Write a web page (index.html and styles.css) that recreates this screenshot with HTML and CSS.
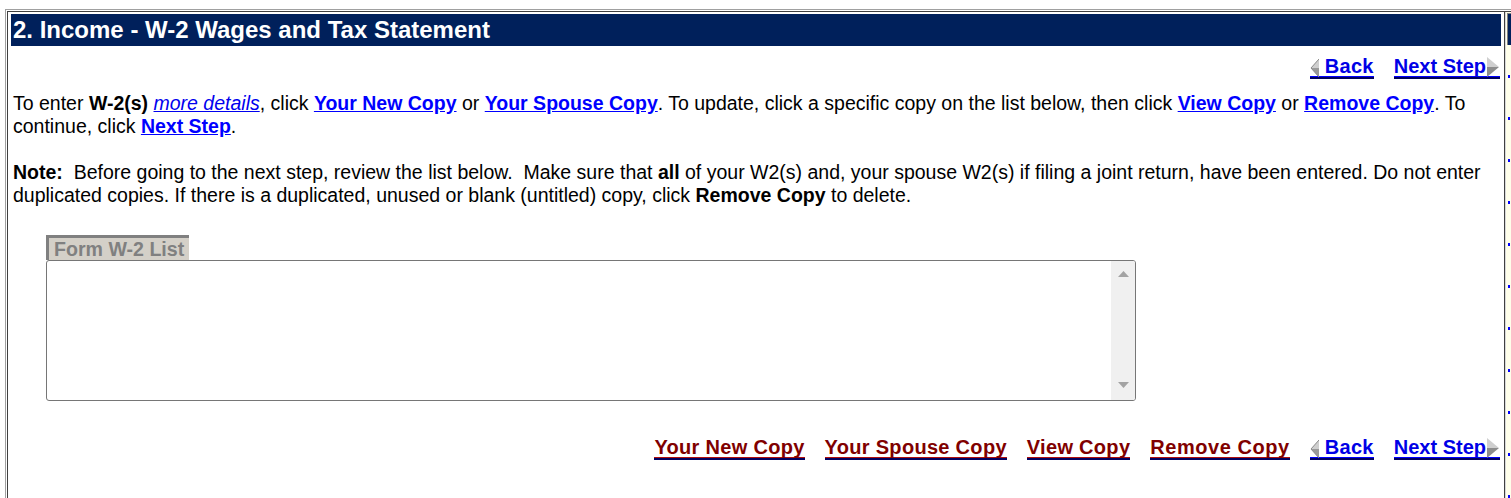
FILE: index.html
```html
<!DOCTYPE html>
<html>
<head>
<meta charset="utf-8">
<title>Income - W-2 Wages and Tax Statement</title>
<link rel="stylesheet" href="styles.css">
</head>
<body>
<div class="frameset">
  <div class="frameset-inner">
    <main class="main">
      <div class="title">2. Income - W-2 Wages and Tax Statement</div>
      <div class="navrow top">
        <a class="imgbtn blue back" href="#"><svg class="arr-l" width="9" height="20" viewBox="0 0 9 20"><polygon points="9,1 1,10 9,10" fill="#cfcfcf"/><polygon points="1,10 9,10 9,19" fill="#9a9a9a"/><polyline points="9,1 1,10 9,19" fill="none" stroke="#8a8a8a" stroke-width="1"/></svg><span>Back</span></a>
        <a class="imgbtn blue next" href="#"><span>Next Step</span><svg class="arr-r" width="13" height="20" viewBox="0 0 13 20"><polygon points="0,0 12,10 0,10" fill="#cfcfcf"/><polygon points="0,10 12,10 0,20" fill="#8c8c8c"/></svg></a>
      </div>
      <p class="para">To enter <b>W-2(s)</b> <a class="detail" href="#">more details</a>, click <a class="lnk" href="#">Your New Copy</a> or <a class="lnk" href="#">Your Spouse Copy</a>. To update, click a specific copy on the list below, then click <a class="lnk" href="#">View Copy</a> or <a class="lnk" href="#">Remove Copy</a>. To continue, click <a class="lnk" href="#">Next Step</a>.</p>
      <p class="para note"><b>Note:</b>&nbsp; Before going to the next step, review the list below.&nbsp; Make sure that <b>all</b> of your W2(s) and, your spouse W2(s) if filing a joint return, have been entered. Do not enter duplicated copies. If there is a duplicated, unused or blank (untitled) copy, click <b>Remove Copy</b> to delete.</p>
      <div class="list-section">
        <div class="tab">Form W-2 List</div>
        <div class="listbox">
          <div class="scroll">
            <svg width="11" height="6" viewBox="0 0 11 6"><polygon points="5.5,0 11,6 0,6" fill="#a3a3a3"/></svg>
            <svg width="11" height="6" viewBox="0 0 11 6"><polygon points="0,0 11,0 5.5,6" fill="#a3a3a3"/></svg>
          </div>
        </div>
      </div>
      <div class="navrow bottom">
        <a class="imgbtn red" href="#"><span>Your New Copy</span></a>
        <a class="imgbtn red" href="#"><span>Your Spouse Copy</span></a>
        <a class="imgbtn red" href="#"><span>View Copy</span></a>
        <a class="imgbtn red wide" href="#"><span>Remove Copy</span></a>
        <a class="imgbtn blue back" href="#"><svg class="arr-l" width="9" height="20" viewBox="0 0 9 20"><polygon points="9,1 1,10 9,10" fill="#cfcfcf"/><polygon points="1,10 9,10 9,19" fill="#9a9a9a"/><polyline points="9,1 1,10 9,19" fill="none" stroke="#8a8a8a" stroke-width="1"/></svg><span>Back</span></a>
        <a class="imgbtn blue next" href="#"><span>Next Step</span><svg class="arr-r" width="13" height="20" viewBox="0 0 13 20"><polygon points="0,0 12,10 0,10" fill="#cfcfcf"/><polygon points="0,10 12,10 0,20" fill="#8c8c8c"/></svg></a>
      </div>
    </main>
    <div class="sep"></div>
    <aside class="side">
      <div class="side-head"></div>
      <div class="dots"></div>
    </aside>
  </div>
</div>
</body>
</html>
```
FILE: styles.css
```css
html, body {
  margin: 0;
  padding: 0;
  background: #ffffff;
  overflow: hidden;
}
body {
  font-family: "Liberation Sans", Arial, sans-serif;
  color: #000000;
}
.frameset {
  margin: 9px 0 0 5px;
  border-top: 1px solid #a0a0a0;
  border-left: 1px solid #a0a0a0;
  padding: 1px 0 0 1px;
  height: 489px;
  box-sizing: border-box;
}
.frameset-inner {
  border-top: 1px solid #404040;
  border-left: 1px solid #404040;
  display: flex;
  height: 100%;
  box-sizing: border-box;
}
.main {
  flex: 0 0 1496px;
  border-right: 1px solid #404040;
}
.title {
  margin: 2px 3px 0;
  height: 32px;
  background: #00205b;
  color: #ffffff;
  font-weight: bold;
  font-size: 24px;
  line-height: 32px;
  padding-left: 2px;
  white-space: nowrap;
}
.navrow {
  display: flex;
  justify-content: flex-end;
  gap: 20px;
  padding-right: 4px;
}
.navrow.top {
  margin-top: 10px;
}
.navrow.bottom {
  margin-top: 36px;
}
.imgbtn {
  display: inline-flex;
  align-items: flex-start;
  height: 20px;
  line-height: 20px;
  font-size: 20px;
  font-weight: bold;
  text-decoration: none;
  border-bottom: 1px solid;
  box-shadow: 0 2px 0 #000060;
  white-space: nowrap;
}
.imgbtn.blue {
  color: #0000e6;
  border-color: #0000ff;
}
.imgbtn.red {
  color: #800000;
  border-color: #b01010;
  letter-spacing: 0.3px;
}
.imgbtn.red.wide {
  letter-spacing: 0.55px;
}
.imgbtn.back {
  letter-spacing: 0.3px;
}
.imgbtn .arr-l {
  margin-top: 2px;
  margin-right: 6px;
}
.imgbtn .arr-r {
  margin-top: 1px;
  margin-left: 1px;
}
.para {
  margin: 15px 0 0;
  padding: 0 5px;
  font-size: 19.5px;
  line-height: 23px;
}
.para.note {
  margin-top: 23px;
}
.para .lnk {
  color: #0000ff;
  font-weight: bold;
  text-decoration: underline;
}
.para .detail {
  color: #0000ee;
  font-style: italic;
  text-decoration: underline;
}
.list-section {
  margin: 28px 0 0 38px;
}
.tab {
  box-sizing: border-box;
  width: 143px;
  height: 25px;
  border-top: 3px solid #808080;
  border-left: 3px solid #808080;
  background: #d4d0c8;
  color: #808080;
  font-weight: bold;
  font-size: 19.6px;
  line-height: 22px;
  padding-left: 5px;
  white-space: nowrap;
}
.listbox {
  box-sizing: border-box;
  width: 1090px;
  height: 141px;
  border: 1px solid #767676;
  border-radius: 3px;
  display: flex;
  justify-content: flex-end;
  overflow: hidden;
}
.scroll {
  width: 24px;
  background: #f0f0f0;
  display: flex;
  flex-direction: column;
  justify-content: space-between;
  align-items: center;
  padding: 10px 0 12px;
  box-sizing: border-box;
}
.scroll svg {
  display: block;
}
.sep {
  width: 1px;
  background: #d8d8d8;
}
.side {
  flex: 1;
  background: #ffffea;
}
.side-head {
  margin: 1px 0 0 1px;
  height: 32px;
  background: #00205b;
  border-left: 1px solid #808080;
  border-top: 1px solid #808080;
  box-sizing: border-box;
}
.dots {
  margin: 30px 0 0 2px;
  width: 2px;
  height: 430px;
  background: repeating-linear-gradient(to bottom, #0000ff 0 3px, transparent 3px 42px);
}
```
